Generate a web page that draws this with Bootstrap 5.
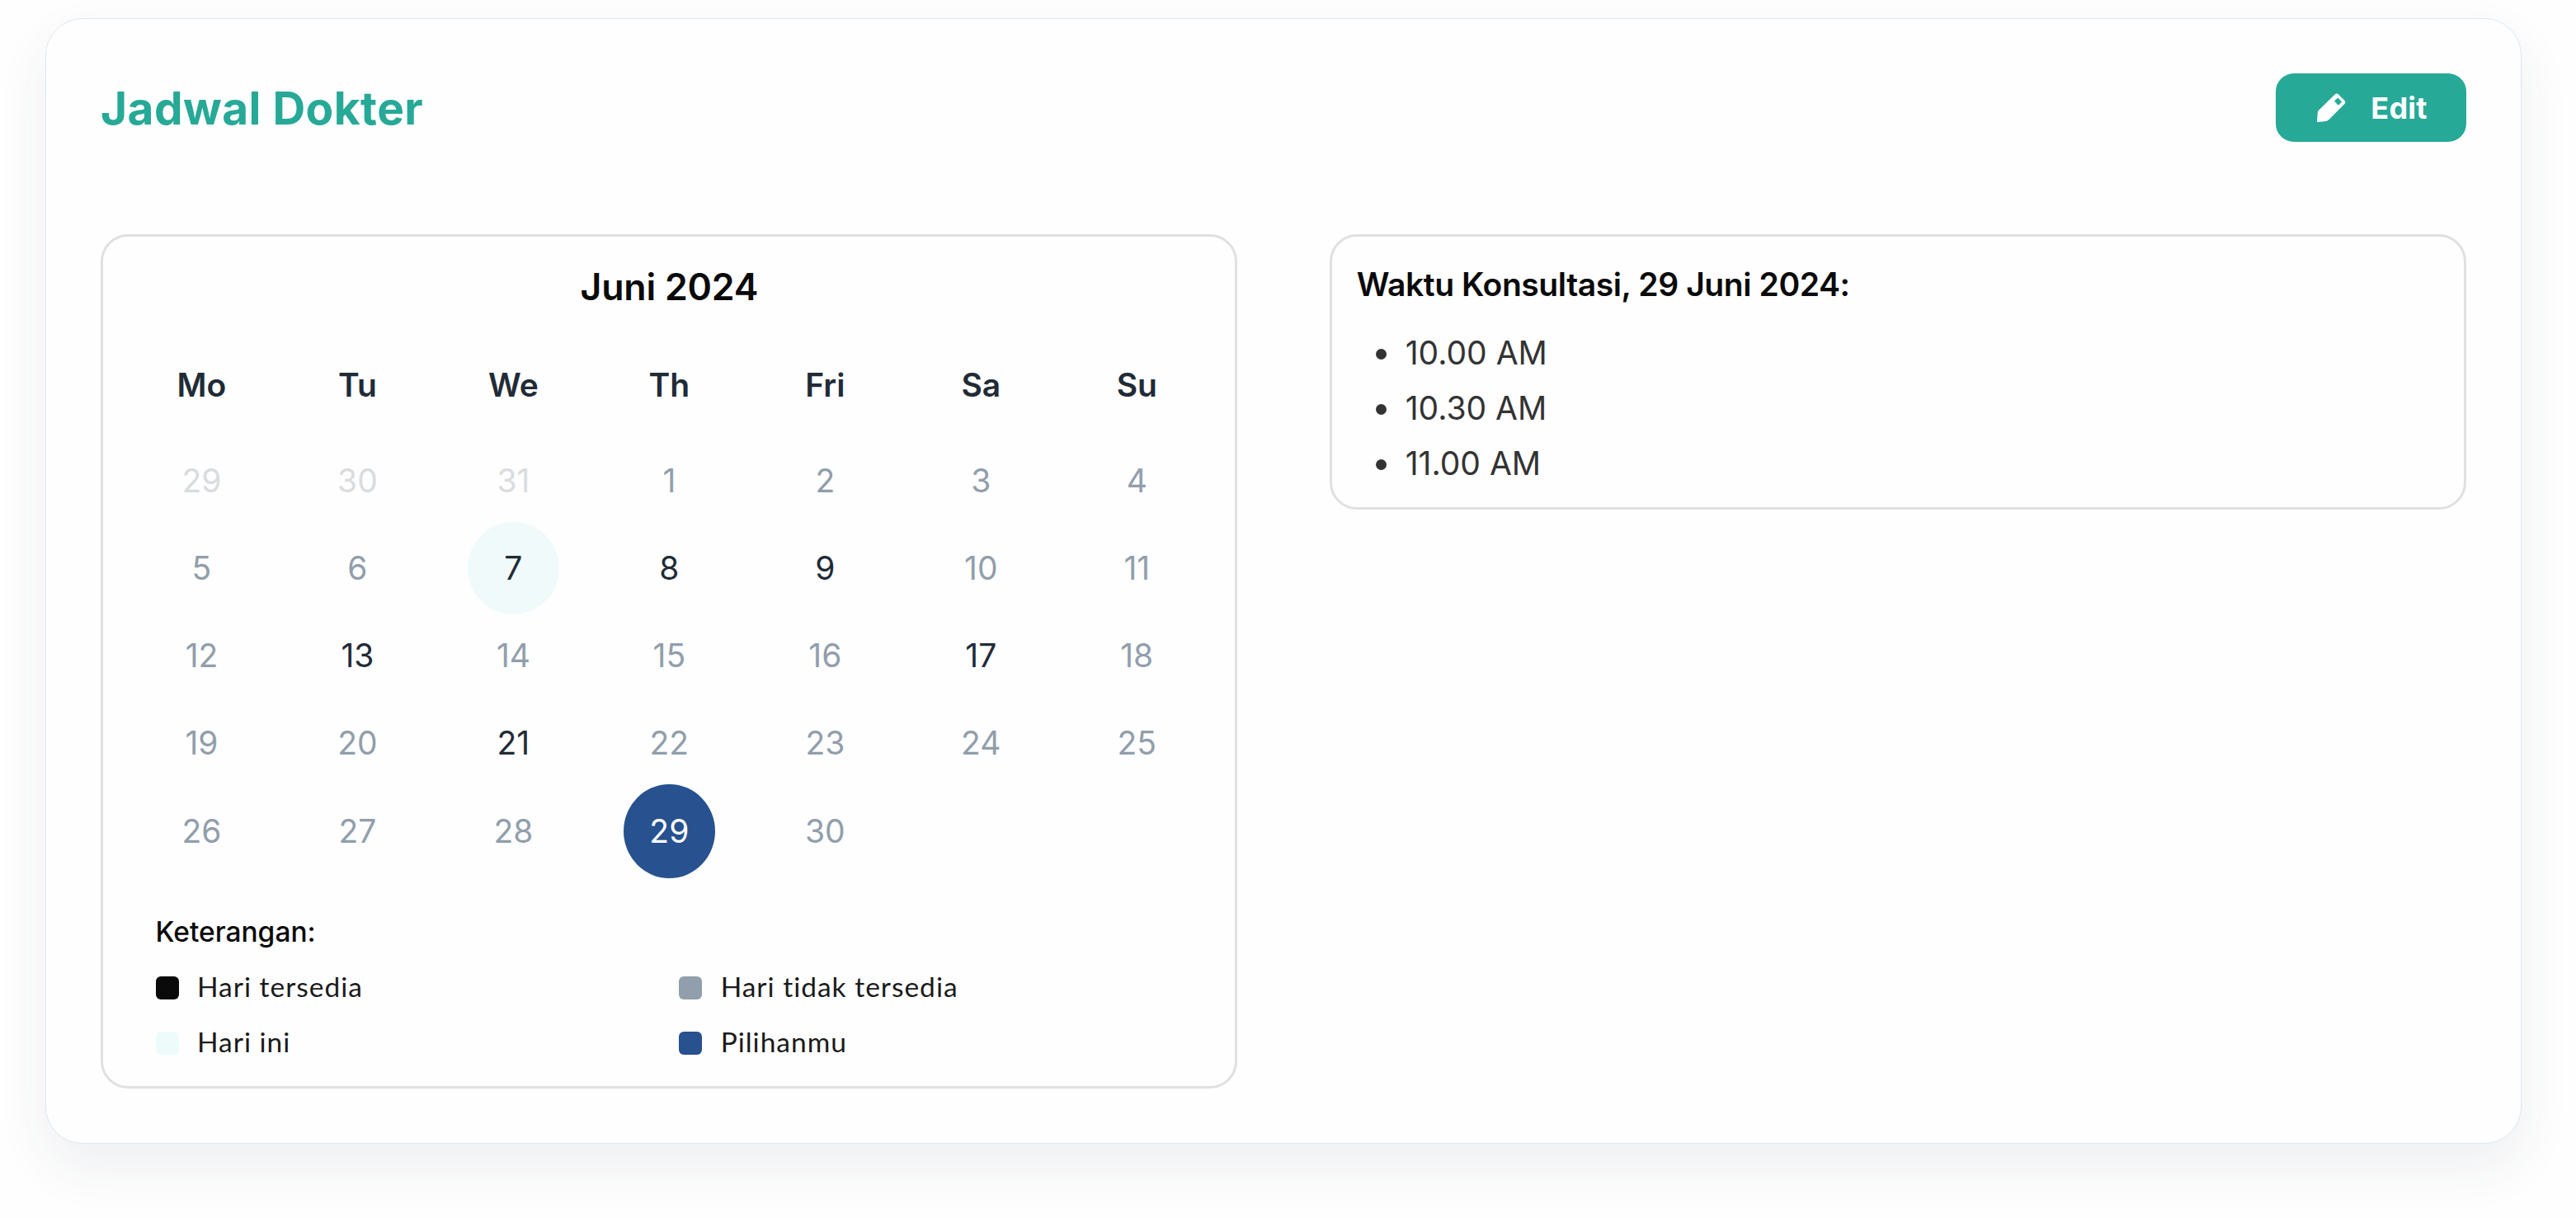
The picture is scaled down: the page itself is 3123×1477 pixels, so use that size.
<!DOCTYPE html>
<html lang="id">
<head>
<meta charset="utf-8">
<title>Jadwal Dokter</title>
<link href="https://cdn.jsdelivr.net/npm/bootstrap@5.3.0/dist/css/bootstrap.min.css" rel="stylesheet">
<style>
body{font-family:Inter,"Liberation Sans",sans-serif;font-size:39px;color:#212b36;background:#fefefe;min-height:100vh;padding:22px 66px 0 55px}
.schedule-card{height:1365px;padding:66px;border:1px solid #dbe8ef;border-radius:45px;background:#fefefe;box-shadow:0 28px 64px rgba(40,60,85,.075)}
.page-title{font-size:55px;line-height:82px;font-weight:700;letter-spacing:.45px;color:#27a997}
.btn-edit{width:231px;height:83px;border-radius:22px;background:#27a997;color:#fff;font-size:36px;font-weight:700;line-height:1;gap:30px;padding:0 0 0 3px;letter-spacing:.2px}
.btn-edit:hover{background:#219482;color:#fff}
.btn-edit svg{width:35px;height:35px}
.panels{margin-top:112px;gap:112px}
.panel{flex:1 1 50%;min-width:0;border:3px solid #e0e0e0;border-radius:33px}
.cal-panel{height:1036px;padding:26px 24px 0 25px}
.month{font-size:44.6px;line-height:70px;font-weight:600;letter-spacing:-.2px;color:#0a0a0a}
.week{display:grid;grid-template-columns:repeat(7,1fr);height:106.1px;align-items:center;justify-items:center}
.week-head{font-weight:600;height:106px;margin-top:31px;margin-bottom:7px}
.day{width:111px;height:112px;border-radius:50%;flex:none;color:#919eab}
.day-out{color:#d9dcdf}
.day-open{color:#212b36}
.day-today{background:#f0fafa}
.day-picked{background:#27518f;color:#fff;height:114px}
.legend{margin:40px 15px 0 38.5px;font-size:33.5px;line-height:67px}
.legend-title{font-weight:500;color:#0a0a0a}
.legend-item{font-family:Lato,sans-serif;color:#1a1a1a;gap:22.5px;letter-spacing:1px}
.legend-item span{margin-top:-1px;margin-bottom:1px}
.swatch{width:28px;height:28px;border-radius:6px;flex:none}
.time-panel{height:334px;padding:24px 31px 24px 30px}
.time-title{line-height:67px;font-weight:600;letter-spacing:-.4px;color:#0a0a0a}
.times{line-height:67px;color:#333;padding-left:23px;margin-top:16px}
.times li::before{content:"";width:13px;height:13px;border-radius:50%;background:#333;margin-right:23px;margin-top:4px}
</style>
</head>
<body>
<main class="schedule-card">
<header class="d-flex justify-content-between align-items-center">
<h1 class="page-title mb-0">Jadwal Dokter</h1>
<button type="button" class="btn btn-edit border-0 d-flex align-items-center justify-content-center">
<svg viewBox="0 0 100 100" aria-hidden="true"><path fill="#fff" fill-rule="evenodd" d="M2 69Q2 63 6 59L61 5Q68-2 75 5L95 25Q101 31 95 38L42 91Q37 96 31 97L3 100Q0 100 0 97ZM72 16L60 28L74 42L86 30Z"/></svg>
<span>Edit</span></button>
</header>
<div class="panels d-flex align-items-start">
<section class="panel cal-panel">
<div class="month text-center">Juni 2024</div>
<div class="week week-head"><span>Mo</span><span>Tu</span><span>We</span><span>Th</span><span>Fri</span><span>Sa</span><span>Su</span></div>
<div id="weeks"></div>
<div class="legend">
<div class="legend-title">Keterangan:</div>
<div class="row g-0">
<div class="col-6 legend-item d-flex align-items-center"><i class="swatch" style="background:#0a0a0a"></i><span>Hari tersedia</span></div>
<div class="col-6 legend-item d-flex align-items-center"><i class="swatch" style="background:#919eab"></i><span>Hari tidak tersedia</span></div>
<div class="col-6 legend-item d-flex align-items-center"><i class="swatch" style="background:#edfcfa"></i><span>Hari ini</span></div>
<div class="col-6 legend-item d-flex align-items-center"><i class="swatch" style="background:#27518f"></i><span>Pilihanmu</span></div>
</div>
</div>
</section>
<section class="panel time-panel">
<div class="time-title">Waktu Konsultasi, 29 Juni 2024:</div>
<ul class="times list-unstyled mb-0">
<li class="d-flex align-items-center">10.00 AM</li>
<li class="d-flex align-items-center">10.30 AM</li>
<li class="d-flex align-items-center">11.00 AM</li>
</ul>
</section>
</div>
</main>
<script src="https://cdn.jsdelivr.net/npm/bootstrap@5.3.0/dist/js/bootstrap.bundle.min.js"></script>
<script>
const open=[7,8,9,13,17,21];
const days=[29,30,31];
for(let d=1;d<=30;d++)days.push(d);
let html='';
for(let i=0;i<days.length;i+=7){
  html+='<div class="week">'+days.slice(i,i+7).map((d,j)=>{
    let c=i+j<3?'day-out':d===29?'day-picked':open.includes(d)?'day-open':'';
    if(d===7)c+=' day-today';
    return '<span class="day d-flex align-items-center justify-content-center '+c+'">'+d+'</span>';
  }).join('')+'</div>';
}
document.getElementById('weeks').innerHTML=html;
</script>
</body>
</html>
